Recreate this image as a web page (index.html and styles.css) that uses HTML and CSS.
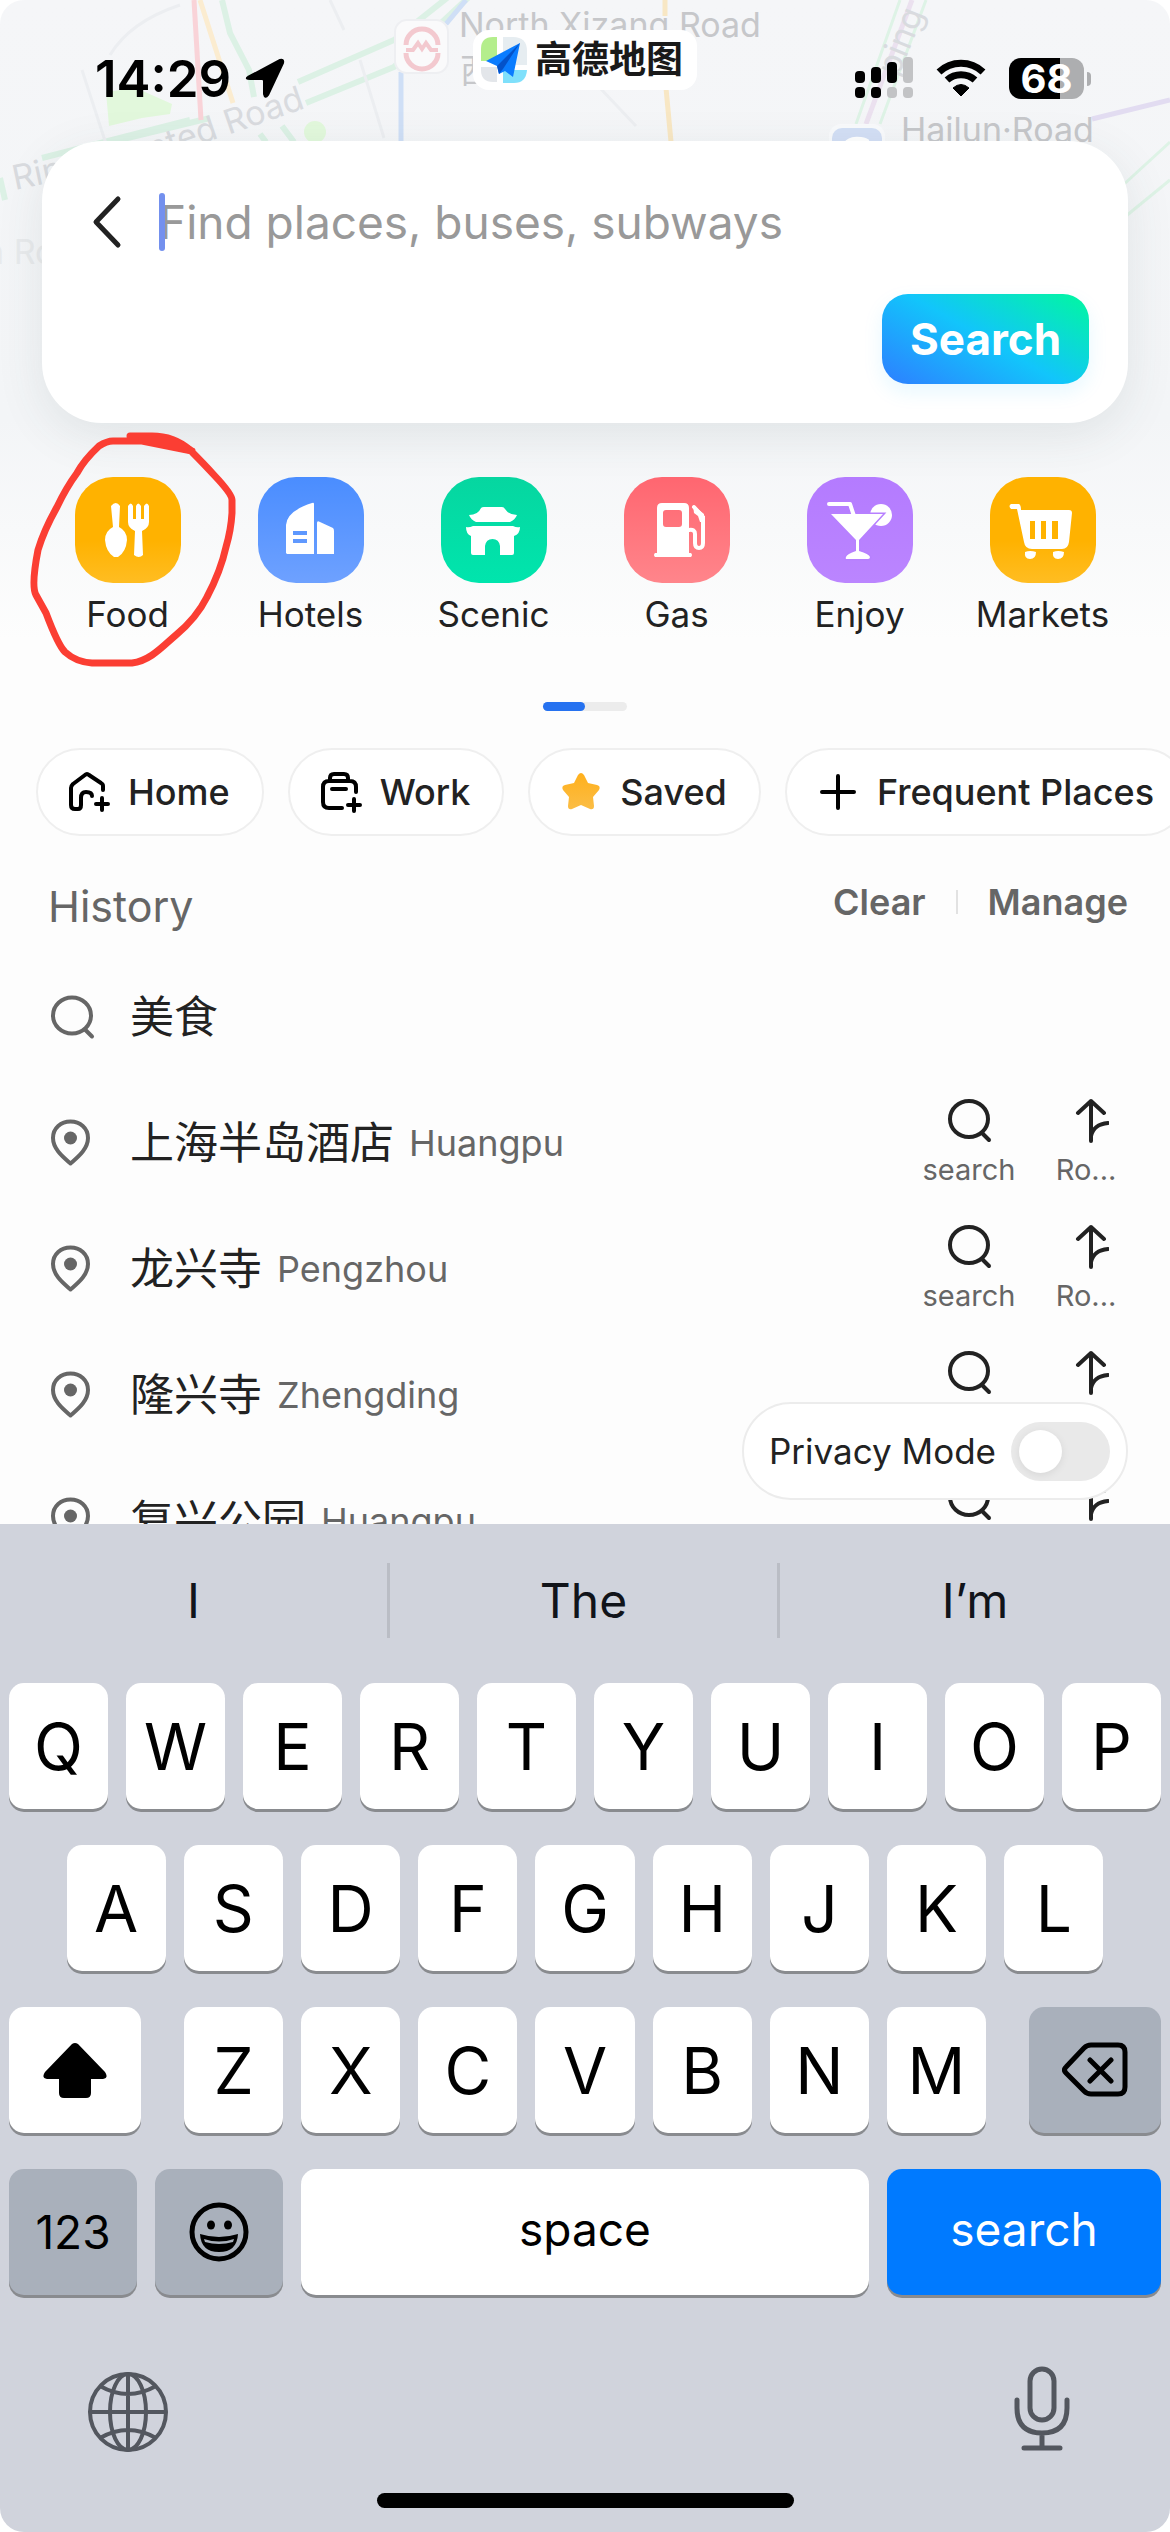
FILE: index.html
```html
<!DOCTYPE html>
<html lang="en">
<head>
  <meta charset="UTF-8" />
  <meta name="viewport" content="width=device-width, initial-scale=1.0" />
  <title>Map Search</title>
  <link rel="stylesheet" href="styles.css">
</head>
<body>
  <!-- shared icons -->
  <svg class="sprite" aria-hidden="true">
    <symbol id="icon-search" viewBox="0 0 45 45">
      <ellipse cx="22" cy="21" rx="19" ry="18" fill="none" stroke="currentColor" stroke-width="4"/>
      <path d="M35 35l7 7" fill="none" stroke="currentColor" stroke-width="4" stroke-linecap="round"/>
    </symbol>
    <symbol id="icon-pin" viewBox="0 0 45 48">
      <path d="M20.500 44.500C13 38 3 30 3 19C3 9 11 2.500 20.500 2.500S38 9 38 19C38 30 28 38 20.500 44.500Z" fill="none" stroke="currentColor" stroke-width="4" stroke-linejoin="round"/>
      <circle cx="20.500" cy="19" r="6.500" fill="currentColor"/>
    </symbol>
    <symbol id="icon-route" viewBox="-7 0 45 45">
      <path d="M20 43V3M7 15L20 3L33 15M20 38C22 29 28 26 37 25" fill="none" stroke="currentColor" stroke-width="4" stroke-linecap="round" stroke-linejoin="round"/>
    </symbol>
  </svg>

  <div class="screen">
    <main class="app">
      <svg class="map" viewBox="0 0 1170 420" aria-hidden="true">
        <g fill="none" stroke-width="5">
          <path d="M0 178L5 200M42 158L190 120M111 142L210 118M298 82L394 40L452 -6M306 103L394 67L470 -4M222 0L230 33L249 70L254 97M282 126L294 142M260 134L266 142" stroke="#dcf1e5" stroke-width="6"/>
          <path d="M194 0L201 120" stroke="#f9d3d8"/>
          <path d="M200 0L216 50L233 103" stroke="#fbecd0"/>
          <path d="M466 0L446 24M401 72V142" stroke="#cfdff6"/>
          <path d="M665 0V16M666 88L671 142" stroke="#f8e7c4"/>
          <path d="M900 0L856 124M926 0L880 124M1122 186L1170 142M1126 216L1170 180" stroke="#def3e6" stroke-width="3"/>
          <path d="M912 0L866 124" stroke="#ebe1ef"/>
          <path d="M1092 119L1170 100" stroke="#e2dcf1"/>
          <path d="M82 70L108 150M330 0L344 30M360 60L384 138M600 88L636 126M110 55C125 30 150 15 180 5" stroke="#eceef1" stroke-width="3"/>
        </g>
        <path d="M106 92L136 88L172 104L170 114L142 118L109 126Z" fill="#e2f8dc"/>
        <circle cx="315" cy="132" r="11" fill="#e2f8dc"/>
        <g class="map-text">
          <text x="459" y="37">North Xizang Road</text>
          <text x="460" y="83">西</text>
          <text x="901" y="142">Hailun·Road</text>
          <text class="faint" transform="translate(306 108) rotate(-19)" text-anchor="end">Elevated Road</text>
          <text class="faint" transform="translate(15 190) rotate(-12)">Ring</text>
          <text class="faint" transform="translate(898 78) rotate(-68)">ping</text>
          <text class="fainter" x="-16" y="264">n Road</text>
        </g>
        <rect x="395" y="20" width="53" height="53" rx="12" fill="#fafafb" stroke="#eeeff2" stroke-width="2"/>
        <g fill="none" stroke="#f3c9cf" stroke-width="5">
          <path d="M406 45A16 16 0 0 1 438 45M406 53A16 16 0 0 0 438 53"/>
          <path d="M406 50H413L418 43L422 49L426 43L431 50H438" stroke-width="4"/>
        </g>
        <rect x="829" y="124" width="56" height="40" rx="12" fill="#f9fafc"/>
        <rect x="832" y="128" width="50" height="40" rx="10" fill="#d3dff5"/>
        <path d="M846 144C850 138 862 138 868 142" fill="none" stroke="#fff" stroke-width="5"/>
      </svg>

      <header class="status">
        <div class="status-time">
          <span>14:29</span>
          <svg width="40" height="40" viewBox="0 0 40 40"><path d="M3 19L35 2Q39 1 38 5L23 37Q20 41 19 36V23Q19 21 17 21H5Q0 21 3 19Z" fill="#000" stroke="#000" stroke-width="2" stroke-linejoin="round"/></svg>
        </div>
        <div class="brand">
          <svg width="46" height="46" viewBox="0 0 46 46">
            <path d="M16 0H12Q0 0 0 12V24H16Z" fill="#b4ee8c"/>
            <path d="M22 0H32Q46 0 46 14V28H22Z" fill="#e6edf1"/>
            <path d="M0 30H16V45H12Q0 45 0 33Z" fill="#e3e6ea"/>
            <path d="M22 33H46Q45 46 33 46H22Z" fill="#7fe0fb"/>
            <path d="M5 24L39 6L32 40L24 34L18 37L16 29Z" fill="#0a7cff"/>
            <path d="M39 6L16 29L18 37L22 32Z" fill="#0452c9"/>
          </svg>
          <span>高德地图</span>
        </div>
        <div class="status-icons">
          <svg width="58" height="42" viewBox="0 0 58 42">
            <rect x="0" y="14" width="10" height="12" rx="4"/><rect x="16" y="10" width="10" height="16" rx="4"/><rect x="32" y="5" width="10" height="21" rx="4"/><rect x="48" y="0" width="10" height="26" rx="4" fill="#c2c3c5"/>
            <rect x="0" y="30" width="10" height="11" rx="4"/><rect x="16" y="30" width="10" height="11" rx="4"/><rect x="32" y="30" width="10" height="11" rx="4" fill="#c2c3c5"/><rect x="48" y="30" width="10" height="11" rx="4" fill="#c2c3c5"/>
          </svg>
          <svg width="52" height="38" viewBox="0 0 52 38">
            <path d="M4 13A32 32 0 0 1 48 13M12 21A21 21 0 0 1 40 21" fill="none" stroke="#000" stroke-width="7"/>
            <path d="M18 29Q26 22 34 29L26 37Z" stroke="#000" stroke-linejoin="round"/>
          </svg>
          <div class="battery"><span>68</span></div>
        </div>
      </header>

      <form class="search-card" onsubmit="return false">
        <div class="search-row">
          <button type="button" class="back" aria-label="Back">
            <svg width="54" height="54" viewBox="0 0 54 54"><path d="M37 4L15 27L37 50" fill="none" stroke="#222" stroke-width="5" stroke-linecap="round" stroke-linejoin="round"/></svg>
          </button>
          <div class="field">
            <span class="caret"></span>
            <input type="text" aria-label="Find places" placeholder="Find places, buses, subways">
          </div>
        </div>
        <button type="submit" class="search-btn">Search</button>
      </form>

      <nav class="categories">
        <button class="category">
          <svg class="tile food" viewBox="0 0 106 106">
            <path d="M36 29Q41 23 45 29L44 50Q52 54 52 63Q51 75 43 80H39Q31 75 30 63Q30 54 38 50Z"/>
            <path d="M53 29Q56 24 58 29V42H61V29Q63 24 66 29V42H69V29Q72 24 74 29V45Q74 51 67 54L68 78Q64 82 59 78L60 54Q53 51 53 45Z"/>
          </svg>
          Food
          <svg class="scribble" viewBox="24 428 220 244" aria-hidden="true">
            <path d="M130 436H152Q174 436 190 450Q204 464 214 475Q232 494 232 500V513Q231 530 226 547C222 565 216 580 207 597C200 611 188 625 176 635C163 646 150 661 132 663H92Q76 662 65 652Q58 645 46 613L36 595Q31 586 38 550Q44 530 57 507Q66 488 77 473Q84 460 99 446Q107 441 113 441H142L192 451"/>
            <path d="M142 439L172 441L190 450Z" fill="#fb3e33"/>
          </svg>
        </button>
        <button class="category">
          <svg class="tile hotels" viewBox="0 0 106 106">
            <path fill-rule="evenodd" d="M28 76V48Q29 34 54 26Q56 25 56 27V77H29ZM35 54V58H49V54ZM35 62V66H49V62Z"/>
            <path d="M59 46Q59 43 62 45L75 51Q76 52 76 54V77H59Z"/>
          </svg>
          Hotels
        </button>
        <button class="category">
          <svg class="tile scenic" viewBox="0 0 106 106">
            <path d="M40 31Q41 30 43 30H61Q63 30 64 32Q68 38 76 38Q74 43 69 45H35Q30 43 28 38Q37 38 40 31Z"/>
            <path d="M32 49H72Q76 51 79 50Q79 57 73 59V76Q73 78 71 78H59V69Q58 62 51.500 62T44 69V78H32Q30 78 30 76V59Q25 57 25 50Q28 51 32 49Z"/>
          </svg>
          Scenic
        </button>
        <button class="category">
          <svg class="tile gas" viewBox="0 0 106 106">
            <path fill-rule="evenodd" d="M33 31Q33 26 38 26H60Q65 26 65 31V76H67Q69 78 67 80H31Q29 78 31 76H33ZM42 33Q39 33 39 36V47Q39 50 42 50H55Q58 50 58 47V36Q58 33 55 33Z"/>
            <path d="M65 53Q71 52 71 57V66Q71 71 75 71Q79 71 79 66V40L70 30" fill="none" stroke="#fff" stroke-width="4" stroke-linecap="round"/>
            <path d="M69 28L80 37V45H76L74 39L70 36Z"/>
          </svg>
          Gas
        </button>
        <button class="category">
          <svg class="tile enjoy" viewBox="0 0 106 106">
            <circle cx="74" cy="38" r="11"/>
            <path d="M24 37H76L52 63V74Q62 77 63 80Q63 82 61 82H40Q38 82 39 80Q40 77 49 74V63Z" stroke="#b780ff" stroke-width="3" paint-order="stroke"/>
            <path d="M22 27H43L47 39" fill="none" stroke="#fff" stroke-width="4" stroke-linecap="round" stroke-linejoin="round"/>
          </svg>
          Enjoy
        </button>
        <button class="category">
          <svg class="tile food" viewBox="0 0 106 106">
            <path d="M21 27H29Q31 28 31 33H79Q82 33 82 36L79 65Q78 72 72 72H42Q35 72 34 65L27 32H21Q18 29 21 27ZM40 44V62H45V44ZM51 44V62H56V44ZM62 44V62H68V44Z" fill-rule="evenodd"/>
            <path d="M35 75Q40 73 46 75Q46 82 40 82T35 75ZM63 75Q68 73 74 75Q74 82 68 82T63 75Z"/>
          </svg>
          Markets
        </button>
      </nav>
      <div class="pager"><span></span></div>

      <div class="chips">
        <button class="chip">
          <svg width="42" height="42" viewBox="0 0 42 42"><path d="M35 19V15Q35 13 33 12L21 4Q19 2 17 4L5 13Q3 15 3 17V34Q3 38 7 38H10Q13 38 13 34V27Q13 21 18 21Q24 21 24 25M34 27V39M28 33H40"/></svg>
          Home
        </button>
        <button class="chip">
          <svg width="42" height="42" viewBox="0 0 42 42"><path d="M36 21V16Q36 10 30 10H9Q3 10 3 16V31Q3 37 9 37H22M10 10V7Q10 3 14 3H24Q28 3 28 7V10M12 18H26M34 28V40M28 34H40"/></svg>
          Work
        </button>
        <button class="chip">
          <svg class="star" width="42" height="42" viewBox="0 0 42 42">
            <defs><linearGradient id="starFill" x2="0" y2="1"><stop offset="0" stop-color="#ffb01c"/><stop offset="1" stop-color="#fbbd45"/></linearGradient></defs>
            <path d="M18 4Q21 0 24 4L28 12L37 14Q41 15 39 19L33 26L34 35Q34 39 30 38L21 34L12 38Q8 39 8 35L9 26L3 19Q1 15 5 14L14 12Z" fill="url(#starFill)"/>
          </svg>
          Saved
        </button>
        <button class="chip">
          <svg width="42" height="42" viewBox="0 0 42 42"><path d="M21 5V37M5 21H37"/></svg>
          Frequent Places
        </button>
      </div>

      <section class="history">
        <div class="history-head">
          <h2>History</h2>
          <div class="history-tools">
            <button>Clear</button>
            <span class="bar"></span>
            <button>Manage</button>
          </div>
        </div>
        <ul class="places">
          <li class="place">
            <svg class="place-icon"><use href="#icon-search"/></svg>
            <span class="name">美食</span>
          </li>
          <li class="place">
            <svg class="place-icon"><use href="#icon-pin"/></svg>
            <span class="name">上海半岛酒店</span>
            <span class="area">Huangpu</span>
            <button class="action"><svg><use href="#icon-search"/></svg>search</button>
            <button class="action route"><svg><use href="#icon-route"/></svg>Ro...</button>
          </li>
          <li class="place">
            <svg class="place-icon"><use href="#icon-pin"/></svg>
            <span class="name">龙兴寺</span>
            <span class="area">Pengzhou</span>
            <button class="action"><svg><use href="#icon-search"/></svg>search</button>
            <button class="action route"><svg><use href="#icon-route"/></svg>Ro...</button>
          </li>
          <li class="place">
            <svg class="place-icon"><use href="#icon-pin"/></svg>
            <span class="name">隆兴寺</span>
            <span class="area">Zhengding</span>
            <button class="action"><svg><use href="#icon-search"/></svg>search</button>
            <button class="action route"><svg><use href="#icon-route"/></svg>Ro...</button>
          </li>
          <li class="place">
            <svg class="place-icon"><use href="#icon-pin"/></svg>
            <span class="name">复兴公园</span>
            <span class="area">Huangpu</span>
            <button class="action"><svg><use href="#icon-search"/></svg>search</button>
            <button class="action route"><svg><use href="#icon-route"/></svg>Ro...</button>
          </li>
        </ul>
      </section>

      <label class="privacy">
        Privacy Mode
        <input type="checkbox" class="toggle">
      </label>
    </main>

    <div class="keyboard">
      <div class="suggestions">
        <button>I</button>
        <button>The</button>
        <button>I’m</button>
      </div>
      <div class="keys">
        <div class="key-row">
          <button class="key">Q</button>
          <button class="key">W</button>
          <button class="key">E</button>
          <button class="key">R</button>
          <button class="key">T</button>
          <button class="key">Y</button>
          <button class="key">U</button>
          <button class="key">I</button>
          <button class="key">O</button>
          <button class="key">P</button>
        </div>
        <div class="key-row inset">
          <button class="key">A</button>
          <button class="key">S</button>
          <button class="key">D</button>
          <button class="key">F</button>
          <button class="key">G</button>
          <button class="key">H</button>
          <button class="key">J</button>
          <button class="key">K</button>
          <button class="key">L</button>
        </div>
        <div class="key-row">
          <button class="key shift" aria-label="Shift">
            <svg width="66" height="56" viewBox="0 0 66 56"><path d="M30 2Q33 0 36 2L63 30Q67 36 61 37H49V51Q49 56 44 56H22Q17 56 17 51V37H5Q-1 36 3 30Z"/></svg>
          </button>
          <button class="key">Z</button>
          <button class="key">X</button>
          <button class="key">C</button>
          <button class="key">V</button>
          <button class="key">B</button>
          <button class="key">N</button>
          <button class="key">M</button>
          <button class="key delete" aria-label="Delete">
            <svg width="66" height="56" viewBox="0 0 66 56"><path d="M29 3H56Q63 3 63 10V45Q63 52 56 52H29Q25 52 22 49L4 31Q1 28 4 25L22 6Q25 3 29 3ZM28 18L49 39M49 18L28 39" fill="none" stroke="#000" stroke-width="5" stroke-linecap="round" stroke-linejoin="round"/></svg>
          </button>
        </div>
        <div class="key-row">
          <button class="key small gray">123</button>
          <button class="key small gray" aria-label="Emoji">
            <svg width="60" height="60" viewBox="0 0 60 60">
              <circle cx="30" cy="30" r="27" fill="none" stroke="#000" stroke-width="5"/>
              <ellipse cx="22" cy="23" rx="4" ry="4.500"/><ellipse cx="39" cy="23" rx="4" ry="4.500"/>
              <path d="M11 32Q30 38 49 32Q48 50 30 50T11 32Z"/>
              <path d="M15 37Q30 42 45 37L44 40Q30 44 16 40Z" fill="#a9b0bb"/>
            </svg>
          </button>
          <button class="key space">space</button>
          <button class="key enter">search</button>
        </div>
      </div>
      <div class="keyboard-foot">
        <button aria-label="Next keyboard">
          <svg width="82" height="86" viewBox="0 0 82 86">
            <g fill="none" stroke="#53575f" stroke-width="4">
              <circle cx="41" cy="46" r="38"/>
              <ellipse cx="41" cy="46" rx="18" ry="38"/>
              <path d="M41 8V84M3 46H79M13 20Q41 36 69 20M13 72Q41 56 69 72"/>
            </g>
          </svg>
        </button>
        <button aria-label="Dictate">
          <svg width="82" height="86" viewBox="0 0 82 86">
            <g fill="none" stroke="#53575f" stroke-width="5" stroke-linecap="round">
              <rect x="29" y="3" width="24" height="51" rx="12"/>
              <path d="M16 34V42Q16 67 41 67T66 42V34M41 67V82M23 82H59"/>
            </g>
          </svg>
        </button>
      </div>
      <div class="home-bar"></div>
    </div>
  </div>
</body>
</html>
```
FILE: styles.css
```css
:root {
  --text: #222222;
  --muted: #666666;
  --line: #efefef;
  --keyboard: #d0d3dc;
  --key-gray: #a9b0bb;
}

* {
  box-sizing: border-box;
}

body {
  margin: 0;
  background: #ffffff;
  color: var(--text);
  font-family: Inter, "Noto Sans CJK SC", sans-serif;
}

button {
  padding: 0;
  border: none;
  background: none;
  color: inherit;
  font: inherit;
  cursor: pointer;
}

svg {
  display: block;
  flex: none;
}

.sprite {
  display: none;
}

.screen {
  display: flex;
  flex-direction: column;
  height: 100vh;
  overflow: hidden;
  border-radius: 24px;
}

.app {
  position: relative;
  flex: 1;
  min-height: 0;
  overflow: hidden;
  background: linear-gradient(#f5f6f8 0, #f3f5f7 420px, #fdfdfd 640px);
}

/* faded map behind the search card */
.map {
  position: absolute;
  top: 0;
  left: 0;
  width: 100%;
}

.map-text {
  font-size: 34px;
  fill: #c6c7ca;
}

.map-text .faint {
  fill: #d9dbdf;
}

.map-text .fainter {
  fill: #e8eaec;
}

/* status bar */
.status {
  position: relative;
  display: flex;
  justify-content: space-between;
  height: 141px;
  padding: 0 86px 0 95px;
}

.status-time,
.status-icons {
  display: flex;
  align-items: center;
  height: 156px;
  color: #000000;
}

.status-time {
  gap: 14px;
  font-size: 51px;
  font-weight: 600;
}

.status-icons {
  gap: 22px;
}

.brand {
  position: absolute;
  top: 30px;
  left: 50%;
  display: flex;
  align-items: center;
  gap: 8px;
  height: 60px;
  padding: 0 14px 0 8px;
  border-radius: 16px;
  background: #ffffff;
  color: #1a1a1a;
  font-size: 37px;
  font-weight: 700;
  line-height: 60px;
  transform: translateX(-50%);
}

.battery {
  position: relative;
  width: 75px;
  height: 41px;
  border-radius: 12px;
  background: linear-gradient(90deg, #000000 68%, #adaeb0 68%);
  color: #ffffff;
  font-size: 40px;
  font-weight: 700;
  line-height: 41px;
  text-align: center;
}

.battery::after {
  content: "";
  position: absolute;
  top: 14px;
  right: -7px;
  width: 4px;
  height: 14px;
  border-radius: 0 6px 6px 0;
  background: #adaeb0;
}

/* search card */
.search-card {
  position: relative;
  display: flex;
  flex-direction: column;
  gap: 30px;
  margin: 0 42px;
  padding: 39px;
  border-radius: 60px;
  background: #ffffff;
  box-shadow: 0 12px 48px rgba(60, 75, 80, 0.1);
}

.search-row {
  display: flex;
  align-items: center;
  gap: 24px;
  height: 84px;
}

.field {
  position: relative;
  flex: 1;
}

.field input {
  display: block;
  width: 100%;
  height: 58px;
  padding: 0;
  border: none;
  outline: none;
  background: none;
  font: inherit;
  font-size: 46px;
}

.field input::placeholder {
  color: #999999;
}

.caret {
  position: absolute;
  top: 0;
  left: 0;
  width: 6px;
  height: 58px;
  border-radius: 3px;
  background: #7390ee;
}

.search-btn {
  align-self: flex-end;
  width: 207px;
  height: 90px;
  border-radius: 26px;
  background: linear-gradient(30deg, #2b85ff 5%, #12c5fb 50%, #02f3a8 95%);
  box-shadow: 0 8px 20px rgba(20, 190, 255, 0.1);
  color: #ffffff;
  font-size: 44px;
  font-weight: 700;
}

/* categories */
.categories {
  display: grid;
  grid-template-columns: repeat(6, 1fr);
  margin-top: 54px;
  padding: 0 36px;
}

.category {
  position: relative;
  display: flex;
  flex-direction: column;
  align-items: center;
  gap: 9px;
  font-size: 35px;
  line-height: 44px;
}

.tile {
  width: 106px;
  height: 106px;
  border-radius: 38px;
  fill: #ffffff;
}

.food {
  background: linear-gradient(#ffb200 60%, #ffbd22);
}

.hotels {
  background: linear-gradient(#4a8dff, #6ea1ff);
}

.scenic {
  background: linear-gradient(#06d6a0, #00e5ad);
}

.gas {
  background: linear-gradient(#ff6670, #ff858b);
}

.enjoy {
  background: linear-gradient(#b47bff, #bb85ff);
}

.scribble {
  position: absolute;
  top: -49px;
  left: -12px;
  width: 220px;
  height: 244px;
  fill: none;
  stroke: #fb3e33;
  stroke-width: 7;
  stroke-linecap: round;
  stroke-linejoin: round;
}

.pager {
  width: 84px;
  height: 9px;
  margin: 66px auto 37px;
  border-radius: 5px;
  background: #ececec;
}

.pager span {
  display: block;
  width: 50%;
  height: 100%;
  border-radius: 5px;
  background: #2672f0;
}

/* shortcut chips */
.chips {
  display: flex;
  gap: 24px;
  padding-left: 36px;
}

.chip {
  display: flex;
  flex: none;
  align-items: center;
  gap: 18px;
  height: 88px;
  padding: 0 32px 0 30px;
  border: 2px solid var(--line);
  border-radius: 44px;
  background: #ffffff;
  font-size: 36px;
  font-weight: 500;
}

.chip svg {
  fill: none;
  stroke: #000000;
  stroke-width: 4;
  stroke-linecap: round;
  stroke-linejoin: round;
}

.chip .star {
  stroke: none;
}

/* history */
.history {
  margin-top: 40px;
}

.history-head {
  display: flex;
  justify-content: space-between;
  padding: 0 42px 0 48px;
  margin-bottom: 18px;
  color: var(--muted);
}

.history h2 {
  margin: 0;
  font-size: 43px;
  font-weight: 400;
  line-height: 60px;
}

.history-tools {
  display: flex;
  align-items: center;
  gap: 30px;
  height: 52px;
  font-size: 36px;
  font-weight: 600;
}

.bar {
  width: 2px;
  height: 24px;
  background: #e2e2e2;
}

.places {
  margin: 0;
  padding: 0;
  list-style: none;
}

.place {
  display: flex;
  align-items: center;
  height: 126px;
  padding: 0 54px 0 50px;
}

.place-icon {
  width: 45px;
  height: 48px;
  margin-right: 35px;
  color: var(--muted);
}

.name {
  font-size: 44px;
  line-height: 60px;
}

.area {
  margin: 0 auto 0 15px;
  color: var(--muted);
  font-size: 36px;
}

.action {
  display: flex;
  flex-direction: column;
  align-items: center;
  gap: 9px;
  width: 94px;
  color: var(--muted);
  font-size: 29px;
  line-height: 36px;
}

.action svg {
  width: 45px;
  height: 45px;
  color: var(--text);
}

.route {
  width: 60px;
  margin-left: 40px;
}

.privacy {
  position: absolute;
  right: 42px;
  bottom: 24px;
  display: flex;
  align-items: center;
  gap: 15px;
  height: 98px;
  padding: 0 16px 0 25px;
  border: 2px solid #ececec;
  border-radius: 49px;
  background: #ffffff;
  font-size: 35px;
}

.toggle {
  appearance: none;
  width: 99px;
  height: 59px;
  margin: 0;
  padding: 8px;
  border-radius: 30px;
  background: #e9e9e9;
}

.toggle::before {
  content: "";
  display: block;
  width: 43px;
  height: 43px;
  border-radius: 50%;
  background: #ffffff;
  box-shadow: 0 2px 8px rgba(0, 0, 0, 0.08);
}

.toggle:checked::before {
  margin-left: auto;
}

/* keyboard */
.keyboard {
  flex: none;
  padding: 39px 0 24px;
  background: var(--keyboard);
  color: #000000;
}

.suggestions {
  display: grid;
  grid-template-columns: repeat(3, 1fr);
  margin-bottom: 45px;
}

.suggestions button {
  height: 75px;
  border-right: 3px solid #babdc5;
  color: #11141a;
  font-size: 48px;
}

.suggestions button:last-child {
  border-right: none;
}

.keys {
  display: flex;
  flex-direction: column;
  gap: 36px;
  padding: 0 9px;
}

.key-row {
  display: flex;
  gap: 18px;
}

.inset {
  padding: 0 5%;
}

.key {
  display: flex;
  flex: 1;
  align-items: center;
  justify-content: center;
  min-width: 0;
  height: 126px;
  border-radius: 15px;
  background: #ffffff;
  box-shadow: 0 3px 0 #898b8f;
  font-size: 64px;
}

.shift,
.delete {
  flex: 0 0 132px;
}

.shift {
  margin-right: 25px;
}

.delete {
  margin-left: 25px;
}

.delete,
.gray {
  background: var(--key-gray);
}

.small {
  flex: 0 0 128px;
}

.small,
.space,
.enter {
  font-size: 46px;
}

.space,
.enter {
  padding-bottom: 6px;
}

.enter {
  flex: 0 0 274px;
  background: #007aff;
  color: #ffffff;
}

.keyboard-foot {
  display: flex;
  justify-content: space-between;
  padding: 71px 87px 41px;
}

.home-bar {
  width: 417px;
  height: 15px;
  margin: 0 auto;
  border-radius: 8px;
  background: #000000;
}
```
